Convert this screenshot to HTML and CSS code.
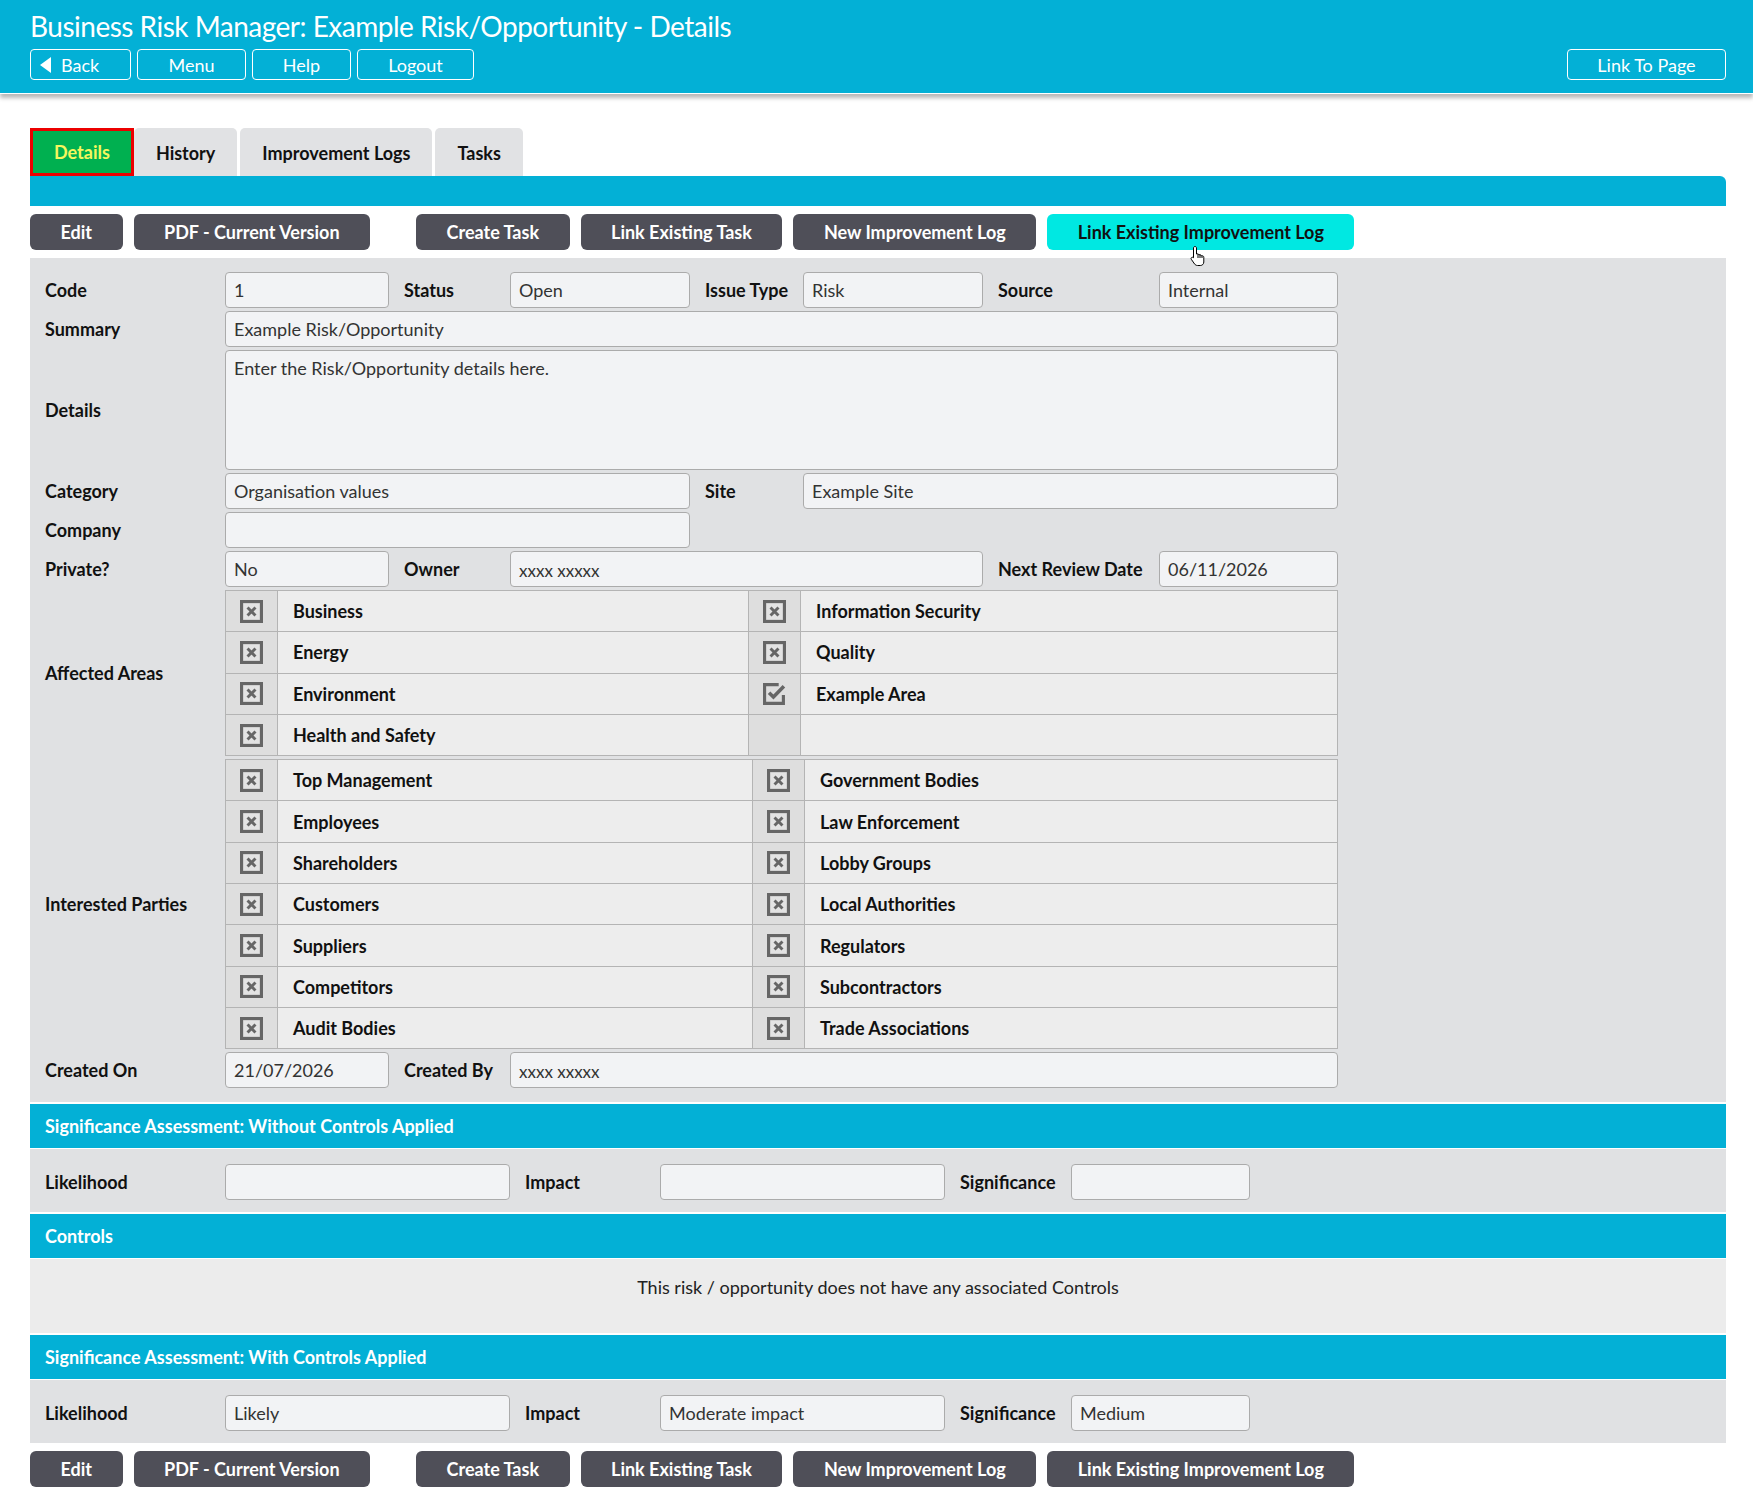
FILE: index.html
```html
<!DOCTYPE html>
<html lang="en">
<head>
    <meta charset="UTF-8">
    <meta name="viewport" content="width=device-width, initial-scale=1.0">
    <title>Business Risk Manager: Example Risk/Opportunity - Details</title>
    <link rel="stylesheet" href="styles.css">
</head>
<body>
    <svg class="defs" width="0" height="0">
        <symbol id="ico-off" viewBox="0 0 22 22">
            <rect x="1.5" y="1.5" width="19" height="19" fill="#e3e3e3" stroke="#666" stroke-width="3"/>
            <path d="M7.2 7.2l7.6 7.6M14.8 7.2l-7.6 7.6" stroke="#666" stroke-width="2.8"/>
        </symbol>
        <symbol id="ico-on" viewBox="0 0 22 22">
            <path d="M15 2.5H1.5v18h18v-8" fill="none" stroke="#666" stroke-width="3"/>
            <path d="M5.8 10.2l4.2 4.2 10-10.4" fill="none" stroke="#666" stroke-width="3.4"/>
        </symbol>
    </svg>

    <header class="topbar">
        <h1>Business Risk Manager: Example Risk/Opportunity - Details</h1>
        <div class="topnav">
            <div class="topnav-left">
                <a class="navbtn navbtn-back"><span class="arrow"></span>Back</a>
                <a class="navbtn navbtn-menu">Menu</a>
                <a class="navbtn navbtn-help">Help</a>
                <a class="navbtn navbtn-logout">Logout</a>
            </div>
            <a class="navbtn navbtn-link">Link To Page</a>
        </div>
    </header>

    <main class="page">
        <nav class="tabs">
            <a class="tab tab-active">Details</a>
            <a class="tab">History</a>
            <a class="tab">Improvement Logs</a>
            <a class="tab">Tasks</a>
        </nav>
        <div class="tabbar"></div>

        <div class="actions">
            <a class="btn">Edit</a>
            <a class="btn">PDF - Current Version</a>
            <a class="btn btn-gap">Create Task</a>
            <a class="btn">Link Existing Task</a>
            <a class="btn">New Improvement Log</a>
            <a class="btn btn-hover">Link Existing Improvement Log
                <svg class="cursor" width="16" height="22" viewBox="0 0 16 22"><path d="M5 1.5c.8 0 1.5.7 1.5 1.5v6l1-.2c.7 0 1.3.5 1.5 1l1-.1c.7 0 1.3.5 1.4 1.1l.9-.1c.8 0 1.5.7 1.5 1.5V17c0 2-1.5 3.5-3.5 3.5H7.5c-1.2 0-2.2-.6-2.9-1.5L1.3 14.3c-.4-.6-.3-1.4.3-1.8.6-.4 1.4-.3 1.8.2l.1.1V3c0-.8.7-1.5 1.5-1.5zM8 9v4M10 10v3M12 11v2" fill="#fff" stroke="#000" stroke-width="1"/></svg>
            </a>
        </div>

        <section class="form">
            <div class="lbl">Code</div>
            <div class="field">1</div>
            <div class="lbl">Status</div>
            <div class="field">Open</div>
            <div class="lbl">Issue Type</div>
            <div class="field">Risk</div>
            <div class="lbl">Source</div>
            <div class="field">Internal</div>

            <div class="lbl row-start">Summary</div>
            <div class="field span-7">Example Risk/Opportunity</div>

            <div class="lbl row-start">Details</div>
            <div class="field field-area span-7">Enter the Risk/Opportunity details here.</div>

            <div class="lbl row-start">Category</div>
            <div class="field span-3">Organisation values</div>
            <div class="lbl">Site</div>
            <div class="field span-3">Example Site</div>

            <div class="lbl row-start">Company</div>
            <div class="field span-3"></div>

            <div class="lbl row-start">Private?</div>
            <div class="field">No</div>
            <div class="lbl">Owner</div>
            <div class="field field-small span-3">xxxx xxxxx</div>
            <div class="lbl">Next Review Date</div>
            <div class="field">06/11/2026</div>

            <div class="lbl row-start">Affected Areas</div>
            <table class="checks span-7">
                <colgroup><col class="col-cb"><col class="col-a1"><col class="col-cb"><col></colgroup>
                <tr>
                    <td class="cb"><svg class="ico"><use href="#ico-off" width="23" height="23"/></svg></td><td>Business</td>
                    <td class="cb"><svg class="ico"><use href="#ico-off" width="23" height="23"/></svg></td><td>Information Security</td>
                </tr>
                <tr>
                    <td class="cb"><svg class="ico"><use href="#ico-off" width="23" height="23"/></svg></td><td>Energy</td>
                    <td class="cb"><svg class="ico"><use href="#ico-off" width="23" height="23"/></svg></td><td>Quality</td>
                </tr>
                <tr>
                    <td class="cb"><svg class="ico"><use href="#ico-off" width="23" height="23"/></svg></td><td>Environment</td>
                    <td class="cb"><svg class="ico"><use href="#ico-on" width="23" height="23"/></svg></td><td>Example Area</td>
                </tr>
                <tr>
                    <td class="cb"><svg class="ico"><use href="#ico-off" width="23" height="23"/></svg></td><td>Health and Safety</td>
                    <td class="cb"></td><td></td>
                </tr>
            </table>

            <div class="lbl row-start">Interested Parties</div>
            <table class="checks span-7">
                <colgroup><col class="col-cb"><col class="col-p1"><col class="col-cb"><col></colgroup>
                <tr>
                    <td class="cb"><svg class="ico"><use href="#ico-off" width="23" height="23"/></svg></td><td>Top Management</td>
                    <td class="cb"><svg class="ico"><use href="#ico-off" width="23" height="23"/></svg></td><td>Government Bodies</td>
                </tr>
                <tr>
                    <td class="cb"><svg class="ico"><use href="#ico-off" width="23" height="23"/></svg></td><td>Employees</td>
                    <td class="cb"><svg class="ico"><use href="#ico-off" width="23" height="23"/></svg></td><td>Law Enforcement</td>
                </tr>
                <tr>
                    <td class="cb"><svg class="ico"><use href="#ico-off" width="23" height="23"/></svg></td><td>Shareholders</td>
                    <td class="cb"><svg class="ico"><use href="#ico-off" width="23" height="23"/></svg></td><td>Lobby Groups</td>
                </tr>
                <tr>
                    <td class="cb"><svg class="ico"><use href="#ico-off" width="23" height="23"/></svg></td><td>Customers</td>
                    <td class="cb"><svg class="ico"><use href="#ico-off" width="23" height="23"/></svg></td><td>Local Authorities</td>
                </tr>
                <tr>
                    <td class="cb"><svg class="ico"><use href="#ico-off" width="23" height="23"/></svg></td><td>Suppliers</td>
                    <td class="cb"><svg class="ico"><use href="#ico-off" width="23" height="23"/></svg></td><td>Regulators</td>
                </tr>
                <tr>
                    <td class="cb"><svg class="ico"><use href="#ico-off" width="23" height="23"/></svg></td><td>Competitors</td>
                    <td class="cb"><svg class="ico"><use href="#ico-off" width="23" height="23"/></svg></td><td>Subcontractors</td>
                </tr>
                <tr>
                    <td class="cb"><svg class="ico"><use href="#ico-off" width="23" height="23"/></svg></td><td>Audit Bodies</td>
                    <td class="cb"><svg class="ico"><use href="#ico-off" width="23" height="23"/></svg></td><td>Trade Associations</td>
                </tr>
            </table>

            <div class="lbl row-start">Created On</div>
            <div class="field">21/07/2026</div>
            <div class="lbl">Created By</div>
            <div class="field field-small span-5">xxxx xxxxx</div>
        </section>

        <h2 class="section-head">Significance Assessment: Without Controls Applied</h2>
        <section class="sig-row">
            <div class="lbl">Likelihood</div>
            <div class="field"></div>
            <div class="lbl">Impact</div>
            <div class="field"></div>
            <div class="lbl">Significance</div>
            <div class="field"></div>
        </section>

        <h2 class="section-head">Controls</h2>
        <section class="controls-body">This risk / opportunity does not have any associated Controls</section>

        <h2 class="section-head">Significance Assessment: With Controls Applied</h2>
        <section class="sig-row">
            <div class="lbl">Likelihood</div>
            <div class="field">Likely</div>
            <div class="lbl">Impact</div>
            <div class="field">Moderate impact</div>
            <div class="lbl">Significance</div>
            <div class="field">Medium</div>
        </section>

        <div class="actions">
            <a class="btn">Edit</a>
            <a class="btn">PDF - Current Version</a>
            <a class="btn btn-gap">Create Task</a>
            <a class="btn">Link Existing Task</a>
            <a class="btn">New Improvement Log</a>
            <a class="btn">Link Existing Improvement Log</a>
        </div>
    </main>
</body>
</html>
```

FILE: styles.css
```css
body {
    margin: 0;
    font-family: Lato, "Open Sans", sans-serif;
    font-size: 18px;
    color: #111;
    background-color: #fff;
}
.defs {
    position: absolute;
}

/* top bar */
.topbar {
    background-color: #03b0d6;
    color: #fff;
    padding: 9px 27px 13px 30px;
    border-bottom: 1px solid #fff;
    box-shadow: 0 4px 4px rgba(0,0,0,0.28);
}
.topbar h1 {
    margin: 0;
    font-size: 28px;
    font-weight: normal;
    line-height: 34px;
    letter-spacing: -0.5px;
}
.topnav {
    display: flex;
    justify-content: space-between;
    margin-top: 6px;
}
.topnav-left {
    display: flex;
    gap: 6px;
}
.navbtn {
    display: flex;
    align-items: center;
    justify-content: center;
    box-sizing: border-box;
    height: 31px;
    border: 1px solid #fff;
    border-radius: 4px;
    color: #fff;
    font-size: 18px;
    text-decoration: none;
}
.navbtn-back {
    width: 101px;
    justify-content: flex-start;
    padding-left: 9px;
}
.navbtn-menu { width: 109px; }
.navbtn-help { width: 99px; }
.navbtn-logout { width: 117px; }
.navbtn-link { width: 159px; }
.arrow {
    width: 0;
    height: 0;
    border-top: 8px solid transparent;
    border-bottom: 8px solid transparent;
    border-right: 11px solid #fff;
    margin-right: 10px;
}

/* tabs */
.page {
    padding: 0 27px 0 30px;
}
.tabs {
    display: flex;
    margin-top: 34px;
}
.tab {
    display: flex;
    align-items: center;
    box-sizing: border-box;
    height: 48px;
    padding: 2px 22px 0;
    margin-right: 3px;
    background-color: #e1e2e4;
    border-radius: 5px 5px 0 0;
    font-weight: bold;
    color: #111;
}
.tab-active {
    background-color: #00b050;
    color: #f6f65e;
    border: 3px solid #ec0000;
    border-radius: 0;
    padding: 0 21px;
    margin-right: 0;
}
.tabbar {
    height: 30px;
    background-color: #03b0d6;
    border-radius: 0 6px 0 0;
}

/* button rows */
.actions {
    display: flex;
    gap: 11px;
    margin: 8px 0;
}
.btn {
    position: relative;
    display: flex;
    align-items: center;
    height: 36px;
    padding: 0 30.5px;
    border-radius: 6px;
    background-color: #4f4f58;
    color: #fff;
    font-weight: bold;
}
.btn-gap {
    margin-left: 35px;
}
.btn-hover {
    background-color: #00e8e2;
    color: #111;
}
.cursor {
    position: absolute;
    left: 143px;
    top: 31px;
}

/* detail form */
.form {
    display: grid;
    grid-template-columns: 195px 164px 121px 180px 113px 180px 176px 179px;
    row-gap: 3px;
    padding: 14px 0;
    background-color: #e0e1e3;
}
.lbl {
    align-self: center;
    padding-left: 15px;
    font-weight: bold;
    white-space: nowrap;
}
.row-start {
    grid-column: 1;
}
.span-3 { grid-column: span 3; }
.span-5 { grid-column: span 5; }
.span-7 { grid-column: span 7; }
.field {
    display: flex;
    align-items: center;
    box-sizing: border-box;
    height: 36px;
    padding: 0 8px;
    background-color: #f2f3f5;
    border: 1px solid #ababab;
    border-radius: 4px;
    color: #333;
}
.field-area {
    height: 120px;
    align-items: flex-start;
    padding-top: 6px;
}
.field-small {
    font-size: 17px;
    padding-top: 2px;
}

.checks {
    width: 100%;
    table-layout: fixed;
    border-collapse: collapse;
}
.checks td {
    height: 40.3px;
    padding: 0 0 0 15px;
    border: 1px solid #b4b4b4;
    background-color: #ededed;
    font-weight: bold;
}
.checks td.cb {
    padding: 0;
    text-align: center;
    background-color: #dedede;
}
.col-cb { width: 52px; }
.col-a1 { width: 471px; }
.col-p1 { width: 475px; }
.ico {
    display: block;
    width: 23px;
    height: 23px;
    margin: 0 auto;
}

/* sections */
.section-head {
    display: flex;
    align-items: center;
    height: 44px;
    margin: 2px 0 0;
    padding-left: 15px;
    background-color: #03b0d6;
    color: #fff;
    font-size: 18px;
    font-weight: bold;
}
.sig-row {
    display: grid;
    grid-template-columns: 195px 285px 150px 285px 126px 179px;
    margin-top: 1px;
    padding: 15px 0 12px;
    background-color: #e0e1e3;
}
.controls-body {
    margin-top: 1px;
    padding: 17px 0 35px;
    line-height: 22px;
    text-align: center;
    background-color: #ececec;
    color: #222;
}
```
